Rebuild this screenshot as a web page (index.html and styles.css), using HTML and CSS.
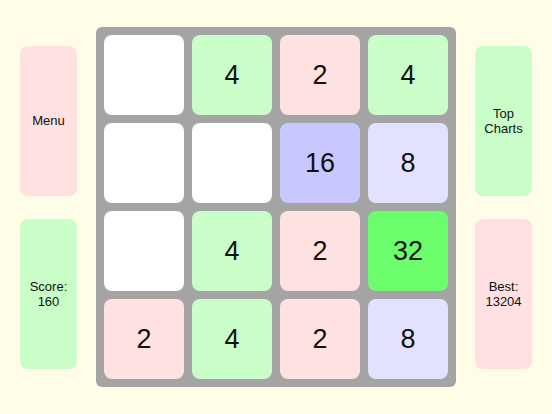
FILE: index.html
```html
<!DOCTYPE html>
<html>
<head>
<meta charset="utf-8">
<link rel="stylesheet" href="styles.css">
</head>
<body>
<div class="page">
  <div class="side">
    <div class="btn pink">Menu</div>
    <div class="btn green">Score:<br>160</div>
  </div>
  <div class="board">
    <div class="tile t0"></div>
    <div class="tile t4">4</div>
    <div class="tile t2">2</div>
    <div class="tile t4">4</div>
    <div class="tile t0"></div>
    <div class="tile t0"></div>
    <div class="tile t16">16</div>
    <div class="tile t8">8</div>
    <div class="tile t0"></div>
    <div class="tile t4">4</div>
    <div class="tile t2">2</div>
    <div class="tile t32">32</div>
    <div class="tile t2">2</div>
    <div class="tile t4">4</div>
    <div class="tile t2">2</div>
    <div class="tile t8">8</div>
  </div>
  <div class="side">
    <div class="btn green">Top<br>Charts</div>
    <div class="btn pink">Best:<br>13204</div>
  </div>
</div>
</body>
</html>
```
FILE: styles.css
```css
html, body {
  margin: 0;
  padding: 0;
  background: #fffde8;
}
.page {
  width: 552px;
  height: 414px;
  display: flex;
  align-items: center;
  justify-content: center;
  gap: 19px;
  font-family: "Liberation Sans", Arial, sans-serif;
  color: #111;
}
.side {
  display: flex;
  flex-direction: column;
  gap: 23px;
  width: 57px;
}
.btn {
  height: 150px;
  border-radius: 8px;
  display: flex;
  align-items: center;
  justify-content: center;
  text-align: center;
  font-size: 13px;
  line-height: 15px;
}
.pink { background: #ffe1e1; }
.green { background: #c9fec9; }
.board {
  width: 360px;
  height: 360px;
  box-sizing: border-box;
  padding: 8px;
  background: #a4a4a4;
  border-radius: 6px;
  display: grid;
  grid-template-columns: repeat(4, 80px);
  grid-template-rows: repeat(4, 80px);
  gap: 8px;
}
.tile {
  border-radius: 8px;
  display: flex;
  align-items: center;
  justify-content: center;
  font-size: 27px;
}
.t0 { background: #ffffff; }
.t2 { background: #ffe1e1; }
.t4 { background: #c9fec9; }
.t8 { background: #e2e2fe; }
.t16 { background: #c8c8fe; }
.t32 { background: #6cfd6c; }
```
